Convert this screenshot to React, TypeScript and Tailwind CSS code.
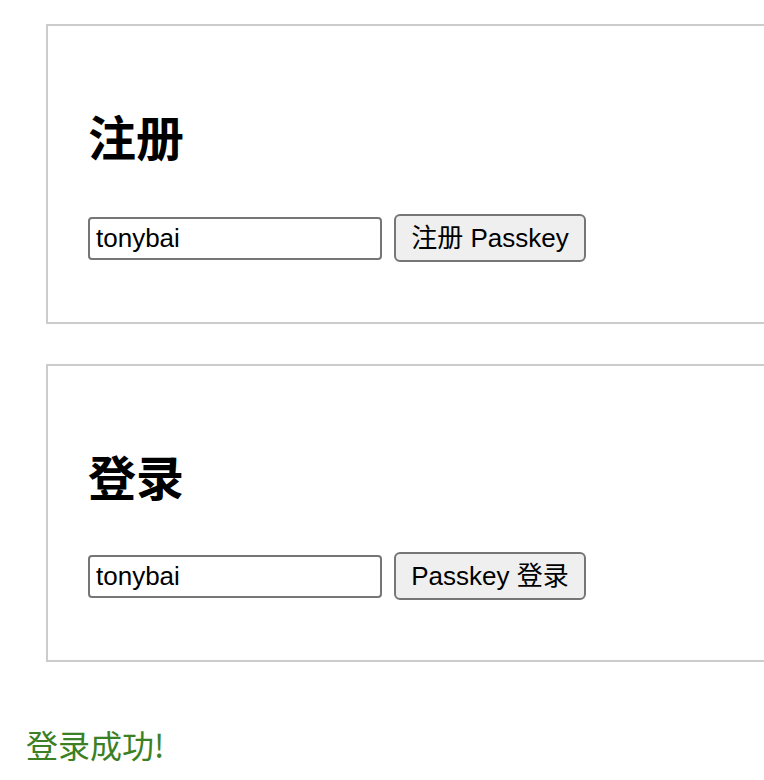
export default function App() {
  return (
    <div className="min-h-[780px] w-[764px] overflow-hidden bg-white pl-[26px] pt-[24px] font-['Liberation_Sans','Noto_Sans_CJK_SC',sans-serif] text-black">
      {/* Register */}
      <div className="ml-[20px] w-[760px] h-[300px] border-2 border-[#cccccc] px-[40px] pt-[86px]">
        <h2 className="text-[48px] leading-[56px] font-bold">注册</h2>
        <div className="mt-[46px] flex items-center gap-[12px]">
          <input
            defaultValue="tonybai"
            className="w-[294px] h-[43px] rounded-[4px] border-2 border-[#767676] px-[6px] text-[26px] outline-none"
          />
          <button className="w-[192px] h-[48px] rounded-[6px] border-2 border-[#767676] bg-[#efefef] text-[26px]">
            注册 Passkey
          </button>
        </div>
      </div>

      {/* Login */}
      <div className="ml-[20px] mt-[40px] w-[760px] h-[298px] border-2 border-[#cccccc] px-[40px] pt-[86px]">
        <h2 className="text-[48px] leading-[56px] font-bold">登录</h2>
        <div className="mt-[44px] flex items-center gap-[12px]">
          <input
            defaultValue="tonybai"
            className="w-[294px] h-[43px] rounded-[4px] border-2 border-[#767676] px-[6px] text-[26px] outline-none"
          />
          <button className="w-[192px] h-[48px] rounded-[6px] border-2 border-[#767676] bg-[#efefef] text-[26px]">
            Passkey 登录
          </button>
        </div>
      </div>

      <p className="mt-[62px] text-[32px] leading-[40px] text-[#3b8024] font-['Noto_Sans_CJK_SC',sans-serif]">登录成功!</p>
    </div>
  );
}
